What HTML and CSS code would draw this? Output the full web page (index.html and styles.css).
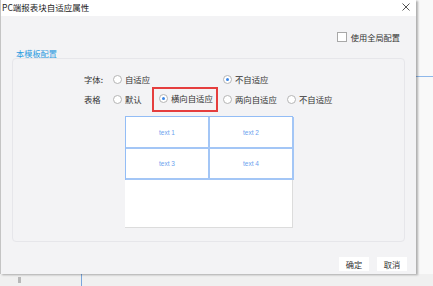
FILE: index.html
```html
<!DOCTYPE html>
<html lang="zh-CN">
<head>
  <meta charset="UTF-8" />
  <title>PC端报表块自适应属性</title>
  <link rel="stylesheet" href="styles.css">
</head>
<body>
  <div class="desk">
    <div class="top">
      <div class="dialog">
        <div class="titlebar">
          <span class="title">PC端报表块自适应属性</span>
          <svg class="close" width="8" height="8" viewBox="0 0 8 8">
            <path d="M0.5 0.5 L7.5 7.5 M7.5 0.5 L0.5 7.5" stroke="#555" stroke-width="1" fill="none"/>
          </svg>
        </div>

        <div class="content">
          <label class="global"><span class="check"></span>使用全局配置</label>

          <div class="group-title">本模板配置</div>
          <div class="group">
            <div class="options">
              <span class="opt-label">字体:</span>
              <label class="radio wide"><span class="dot"></span>自适应</label>
              <label class="radio on col-c"><span class="dot"></span>不自适应</label>

              <span class="opt-label">表格</span>
              <label class="radio"><span class="dot"></span>默认</label>
              <label class="radio on boxed"><span class="dot"></span>横向自适应</label>
              <label class="radio"><span class="dot"></span>两向自适应</label>
              <label class="radio"><span class="dot"></span>不自适应</label>
            </div>

            <div class="preview">
              <div class="cells">
                <div class="cell">text 1</div>
                <div class="cell">text 2</div>
                <div class="cell">text 3</div>
                <div class="cell">text 4</div>
              </div>
            </div>
          </div>

          <div class="actions">
            <button type="button">确定</button>
            <button type="button">取消</button>
          </div>
        </div>
      </div>
      <div class="side"><div class="side-line"></div></div>
    </div>
    <div class="bottom"><span class="tab"></span><span class="vline"></span></div>
  </div>
</body>
</html>
```

FILE: styles.css
```css
html, body {
  margin: 0;
  padding: 0;
  background-color: #f4f4f4;
  font-family: "Noto Sans CJK SC", "Liberation Sans", sans-serif;
  color: #333;
  width: 433px;
  height: 286px;
  overflow: hidden;
}

.desk {
  display: flex;
  flex-direction: column;
  height: 286px;
}

.top {
  display: flex;
  height: 274px;
}

.dialog {
  width: 416px;
  height: 274px;
  border-left: 1px solid #c4c4c4;
  box-sizing: border-box;
  background-color: #f3f3f5;
  box-shadow: 2px 1px 2px rgba(0,0,0,0.3);
  display: flex;
  flex-direction: column;
  position: relative;
  z-index: 1;
}

.titlebar {
  height: 15px;
  background-color: #fff;
  display: flex;
  justify-content: space-between;
  align-items: flex-start;
  padding: 1px 6px 0 1px;
}

.title {
  font-size: 8.5px;
  line-height: 12px;
  color: #222;
}

.close {
  margin-top: 2px;
}

.content {
  flex: 1;
  padding: 0 11px;
  display: flex;
  flex-direction: column;
}

.global {
  align-self: flex-end;
  margin: 16px 5px 0 0;
  display: flex;
  align-items: center;
  font-size: 8.2px;
  line-height: 10px;
  color: #333;
}

.check {
  width: 8px;
  height: 8px;
  border: 1px solid #a8a8a8;
  background-color: #fff;
  margin-right: 4px;
}

.group-title {
  margin: 6px 0 0 4px;
  font-size: 8.2px;
  line-height: 10px;
  color: #2d9be0;
}

.group {
  border: 1px solid #e6e6ea;
  border-radius: 4px;
  padding: 10px 0 13px 71px;
  height: 184px;
  box-sizing: border-box;
}

.options {
  display: grid;
  grid-template-columns: 29px 40px 70px 64px auto;
  grid-template-rows: 20px 20px;
  align-items: center;
  font-size: 8.4px;
  line-height: 12px;
  color: #333;
}

.opt-label {
  grid-column: 1;
}

.radio {
  display: flex;
  align-items: center;
  white-space: nowrap;
}

.radio.wide {
  grid-column: 2 / span 2;
}

.radio.col-c {
  grid-column: 4;
}

.dot {
  width: 7px;
  height: 7px;
  border-radius: 50%;
  border: 1px solid #b5b5b5;
  background-color: #fff;
  margin-right: 3px;
  display: flex;
  align-items: center;
  justify-content: center;
}

.radio.on .dot::after {
  content: "";
  width: 3px;
  height: 3px;
  border-radius: 50%;
  background-color: #3b86e6;
}

.radio.boxed {
  align-self: start;
  justify-self: start;
  align-items: flex-start;
  width: 66px;
  height: 25px;
  box-sizing: border-box;
  border: 2px solid #e53e3e;
  padding: 3px 0 0 5px;
  margin: -2px 0 0 -1px;
}

.radio.boxed .dot {
  margin-top: 2px;
}

.preview {
  margin: 7px 0 0 41px;
  width: 168px;
  height: 112px;
  background-color: #fff;
  border-right: 1px solid #dcdcdc;
  border-bottom: 1px solid #dcdcdc;
  box-sizing: border-box;
}

.cells {
  display: grid;
  grid-template-columns: 84px 84px;
  grid-template-rows: 32px 31px;
  border-top: 1px solid #93bdf6;
  border-left: 1px solid #93bdf6;
  width: 168px;
  box-sizing: border-box;
}

.cell {
  border-right: 2px solid #a3c6f6;
  border-bottom: 2px solid #a3c6f6;
  display: flex;
  align-items: center;
  justify-content: center;
  font-family: "Liberation Sans", sans-serif;
  font-size: 6.5px;
  color: #6c9fee;
}

.actions {
  display: flex;
  justify-content: flex-end;
  gap: 8px;
  margin: 15px -2px 0 0;
}

.actions button {
  width: 30px;
  height: 14px;
  padding: 0;
  border: none;
  background-color: #fff;
  font-family: "Noto Sans CJK SC", sans-serif;
  font-size: 8.2px;
  color: #333;
}

.side {
  flex: 1;
  background-color: #f9f9f9;
  padding-top: 76px;
}

.side-line {
  height: 1px;
  background-color: #8fb8ea;
}

.bottom {
  flex: 1;
  background-color: #f0f0f0;
  display: flex;
  padding-left: 18px;
}

.tab {
  width: 3px;
  height: 6px;
  margin-top: 3px;
  background-color: #b8b8b8;
}

.vline {
  width: 1px;
  margin-left: 60px;
  background-color: #7aa6dc;
}
```
